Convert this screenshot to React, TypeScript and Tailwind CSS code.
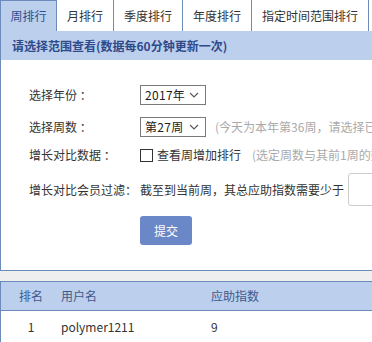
import { useState } from "react";

const tabs = [
  { label: "周排行", w: "w-[57px]" },
  { label: "月排行", w: "w-[57px]" },
  { label: "季度排行", w: "w-[69px]" },
  { label: "年度排行", w: "w-[69px]" },
  { label: "指定时间范围排行", w: "w-[117px]" },
];

function Chevron() {
  return (
    <svg width="10" height="6" viewBox="0 0 10 6" className="ml-auto mr-[6px] shrink-0">
      <path d="M1 1l4 4 4-4" fill="none" stroke="#555" strokeWidth="1.1" />
    </svg>
  );
}

function Select({ value }: { value: string }) {
  return (
    <div className="flex h-[20px] w-[66px] shrink-0 items-center border border-[#7a7a7a] pl-[4px] text-[12px] text-[#222]">
      <span className="tracking-[0.3px]">{value}</span>
      <Chevron />
    </div>
  );
}

export default function App() {
  const [active] = useState(0);

  return (
    <div
      className="h-[342px] w-[372px] overflow-hidden bg-white text-[12px] text-[#333]"
      style={{ fontFamily: '"Noto Sans CJK SC", "Noto Sans", sans-serif' }}
    >
      {/* tabs */}
      <div className="flex h-[31px]">
        {tabs.map((t, i) => (
          <div
            key={t.label}
            className={`${t.w} flex shrink-0 items-center justify-center border-r border-[#6b8cba] leading-none ${
              i === active
                ? "border-l border-t bg-[#bccfec] text-[#2f4f8f]"
                : "bg-white text-[#333]"
            }`}
          >
            {t.label}
          </div>
        ))}
      </div>

      {/* panel */}
      <div className="border-b border-l border-[#6b8cba]">
        <div className="flex h-[29px] items-center bg-[#bccfec] pl-[11px] font-bold text-[#2f4a8a]">
          请选择范围查看(数据每60分钟更新一次)
        </div>

        <div className="flex flex-col pb-[25px] pl-[28px] pt-[25px]">
          <div className="flex h-[20px] items-center">
            <span className="w-[111px] shrink-0">选择年份 ：</span>
            <Select value="2017年" />
          </div>

          <div className="mt-[12px] flex h-[20px] items-center whitespace-nowrap">
            <span className="w-[111px] shrink-0">选择周数 ：</span>
            <Select value="第27周" />
            <span className="ml-[9px] text-[#aaa]">(今天为本年第36周，请选择已结束的周数)</span>
          </div>

          <div className="mt-[8px] flex h-[20px] items-center whitespace-nowrap">
            <span className="w-[111px] shrink-0">增长对比数据 ：</span>
            <span className="h-[13px] w-[13px] shrink-0 border border-[#333]" />
            <span className="ml-[4px]">查看周增加排行</span>
            <span className="ml-[11px] text-[#aaa]">(选定周数与其前1周的数据对比)</span>
          </div>

          <div className="mt-[8px] flex h-[33px] items-center whitespace-nowrap">
            <span className="w-[111px] shrink-0">增长对比会员过滤：</span>
            <span>截至到当前周，其总应助指数需要少于</span>
            <span className="ml-[4px] h-[33px] w-[60px] shrink-0 rounded-[3px] border border-[#ccc]" />
          </div>

          <div className="ml-[111px] mt-[10px] flex h-[29px] w-[52px] items-center justify-center rounded-[3px] bg-[#6a88c8] text-white">
            提交
          </div>
        </div>
      </div>

      <div className="h-[10px] bg-[#efefef]" />

      {/* table */}
      <div className="border-l border-t border-[#6b8cba]">
        <div className="grid h-[29px] grid-cols-[60px_150px_1fr] items-center border-b border-[#6b8cba] bg-[#bccfec] text-[#3d5a8e]">
          <span className="text-center">排名</span>
          <span>用户名</span>
          <span>应助指数</span>
        </div>
        <div className="grid h-[32px] grid-cols-[60px_150px_1fr] items-center">
          <span className="text-center">1</span>
          <span>polymer1211</span>
          <span>9</span>
        </div>
      </div>
    </div>
  );
}
